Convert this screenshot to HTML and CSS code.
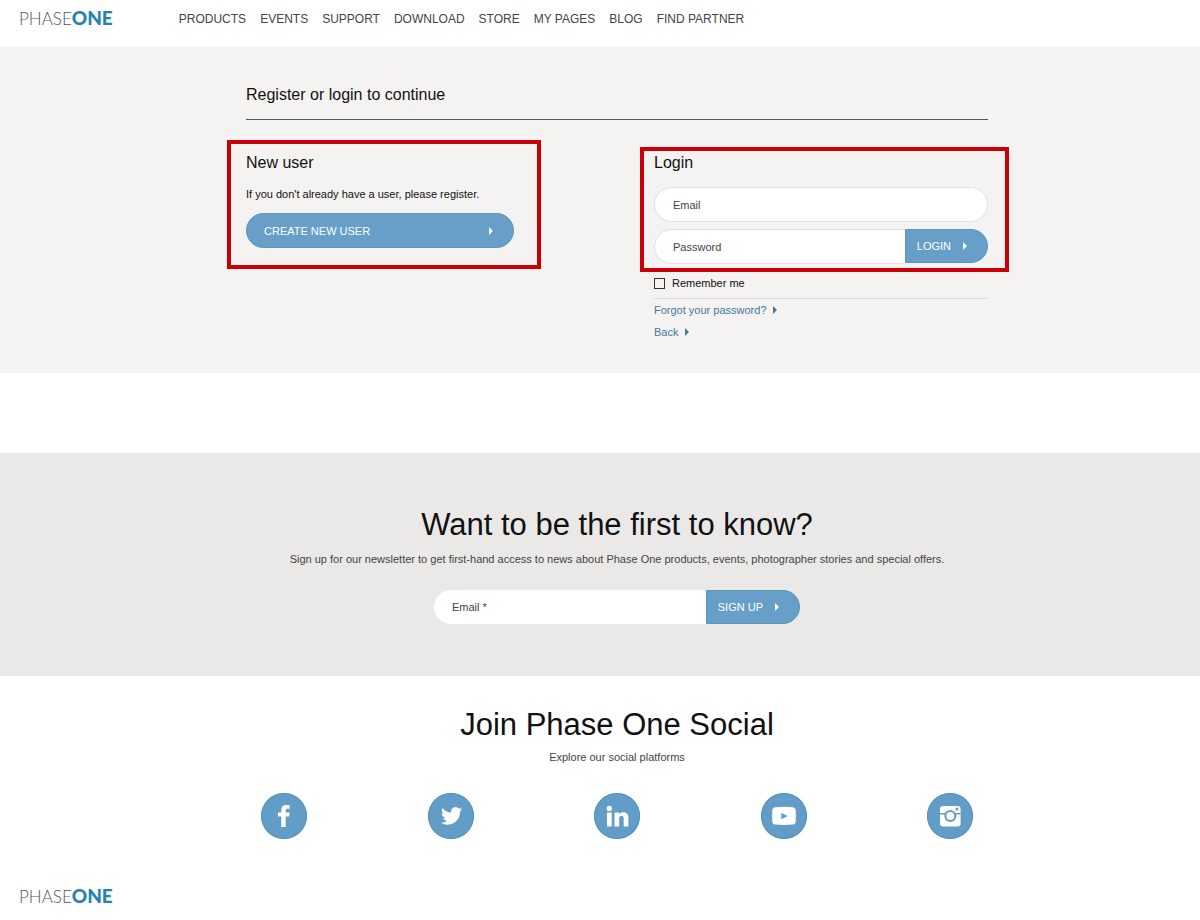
FILE: index.html
```html
<!DOCTYPE html>
<html lang="en">
  <head>
    <meta charset="UTF-8" />
    <meta name="viewport" content="width=device-width, initial-scale=1.0" />
    <title>Phase One - Login</title>
    <link rel="stylesheet" href="styles.css">
  </head>
  <body>
    <header class="header">
      <a class="logo" href="#">PHASE<b>ONE</b></a>
      <nav class="nav">
        <a href="#">PRODUCTS</a>
        <a href="#">EVENTS</a>
        <a href="#">SUPPORT</a>
        <a href="#">DOWNLOAD</a>
        <a href="#">STORE</a>
        <a href="#">MY PAGES</a>
        <a href="#">BLOG</a>
        <a href="#">FIND PARTNER</a>
      </nav>
    </header>

    <main>
      <section class="account">
        <div class="container">
          <h1 class="page-title">Register or login to continue</h1>
          <div class="columns">
            <div class="box new-user">
              <h2>New user</h2>
              <p>If you don't already have a user, please register.</p>
              <button class="btn btn-wide" type="button">CREATE NEW USER <span class="arrow"></span></button>
            </div>
            <form class="login">
              <div class="box login-box">
                <h2>Login</h2>
                <input class="field" type="email" name="email" placeholder="Email" aria-label="Email" />
                <div class="field-row">
                  <input class="field" type="password" name="password" placeholder="Password" aria-label="Password" />
                  <button class="btn" type="submit">LOGIN <span class="arrow"></span></button>
                </div>
              </div>
              <div class="login-extra">
                <div class="remember">
                  <input type="checkbox" id="remember" name="remember" />
                  <label for="remember">Remember me</label>
                </div>
                <a href="#">Forgot your password? <span class="arrow"></span></a>
                <a href="#">Back <span class="arrow"></span></a>
              </div>
            </form>
          </div>
        </div>
      </section>

      <section class="newsletter">
        <h2 class="big-title">Want to be the first to know?</h2>
        <p>Sign up for our newsletter to get first-hand access to news about Phase One products, events, photographer stories and special offers.</p>
        <form class="field-row signup">
          <input class="field" type="email" name="news-email" placeholder="Email *" aria-label="Email" required />
          <button class="btn" type="submit">SIGN UP <span class="arrow"></span></button>
        </form>
      </section>

      <section class="social">
        <h2 class="big-title">Join Phase One Social</h2>
        <p>Explore our social platforms</p>
        <div class="social-links">
          <a href="#" aria-label="Facebook">
            <svg viewBox="0 0 46 46"><path d="M20.3 34V23.6H17v-4h3.3v-2.4c0-3.5 1.8-5.2 5.1-5.2 1.2 0 2.3.1 3.2.3v3.5h-1.8c-1.6 0-2.1.6-2.1 1.9v1.9h3.9l-.5 4h-3.4V34z" /></svg>
          </a>
          <a href="#" aria-label="Twitter">
            <svg viewBox="1 1 43 43"><path d="M33 16.2c-.7.3-1.5.5-2.3.6.8-.5 1.4-1.3 1.7-2.2-.8.5-1.6.8-2.5 1a4.1 4.1 0 0 0-7.1 3.7c-3.4-.2-6.4-1.8-8.4-4.3-1.1 1.9-.5 4.3 1.3 5.5-.7 0-1.3-.2-1.9-.5 0 2 1.4 3.7 3.3 4.1-.6.2-1.2.2-1.9.1.5 1.6 2 2.8 3.8 2.8a8.2 8.2 0 0 1-6 1.7 11.6 11.6 0 0 0 17.9-10.3c.8-.6 1.5-1.3 2.1-2.2z" /></svg>
          </a>
          <a href="#" aria-label="LinkedIn">
            <svg viewBox="0 0 46 46"><circle cx="15.3" cy="15.4" r="2.7" /><path d="M13 19.6h4.7V33.4H13zM20.5 19.6H25v1.9c.8-1.4 2.3-2.3 4.4-2.3 3.8 0 5 2.5 5 6v8.2h-4.7v-7.3c0-1.8-.3-3.3-2.2-3.3s-2.3 1.5-2.3 3.2v7.4h-4.7z" /></svg>
          </a>
          <a href="#" aria-label="YouTube">
            <svg viewBox="0 0 46 46"><path fill-rule="evenodd" d="M14.5 14.2q8.5-.7 17 0 3 .2 3.2 3.2.4 5.5 0 11-.2 3-3.2 3.2-8.5.7-17 0-3-.2-3.2-3.2-.4-5.5 0-11 .2-3 3.2-3.2zM20.3 20v6.2l6.4-3.1z" /></svg>
          </a>
          <a href="#" aria-label="Instagram">
            <svg viewBox="0 0 46 46">
              <rect x="13" y="13" width="20.6" height="20.6" rx="3" />
              <path class="cut" d="M13 20.1h20.6v1.4H13zM28.6 14.8h2.7v2.7h-2.7z" />
              <circle class="cut" cx="23.3" cy="23" r="6" />
              <circle cx="23.3" cy="23" r="3.9" />
            </svg>
          </a>
        </div>
      </section>
    </main>

    <footer class="footer">
      <a class="logo" href="#">PHASE<b>ONE</b></a>
    </footer>
  </body>
</html>
```

FILE: styles.css
```css
* {
  box-sizing: border-box;
}
body {
  margin: 0;
  background-color: #fff;
  color: #111;
  font-family: "Liberation Sans", Arial, sans-serif;
  font-size: 11px;
  line-height: 16px;
}
h1,
h2,
p {
  margin: 0;
  font-weight: normal;
}
a {
  text-decoration: none;
}

/* header */
.header {
  display: flex;
  align-items: center;
  gap: 66px;
  padding: 9px 19px 18px;
}
.logo {
  color: #555;
  font-family: Lato, sans-serif;
  font-size: 17px;
  font-weight: 300;
  line-height: 20px;
}
.logo b {
  color: #2484ae;
  font-size: 19px;
  font-weight: 900;
  line-height: 16px;
}
.nav {
  display: flex;
  gap: 14px;
}
.nav a {
  color: #444;
  font-size: 12px;
}

/* register / login */
.account {
  padding: 38px 0 30px 34px;
  background-color: #f4f3f2;
}
.container {
  max-width: 742px;
  margin: 0 auto;
}
.page-title {
  padding-bottom: 14px;
  border-bottom: 1px solid #555;
  font-size: 16px;
  line-height: 20px;
}
.columns {
  display: flex;
  justify-content: space-between;
  align-items: flex-start;
  margin: 20px -21px 0 -19px;
}
.box {
  border: 4px solid #c90007;
}
.box h2 {
  font-size: 16px;
  line-height: 20px;
}
.new-user {
  width: 314px;
  padding: 9px 23px 17px 15px;
}
.new-user p {
  margin: 13px 0 11px;
}
.login {
  width: 369px;
  margin-top: 7px;
}
.login-box {
  padding: 2px 17px 4px 10px;
}
.login-box h2 {
  margin-bottom: 14px;
}
.login-box .field-row {
  margin-top: 7px;
}
.login-extra {
  display: flex;
  flex-direction: column;
  padding: 3px 21px 0 14px;
}
.login-extra a {
  color: #42799c;
  line-height: 22px;
}
.login-extra .arrow {
  margin-left: 3px;
}
.remember {
  display: flex;
  align-items: center;
  gap: 7px;
  padding-bottom: 7px;
  border-bottom: 1px solid #dcdcdb;
}
.remember input {
  appearance: none;
  width: 11px;
  height: 11px;
  margin: 0;
  border: 1px solid #333;
}
.remember input:checked {
  background-color: #333;
}

/* fields and buttons */
.field {
  display: block;
  width: 100%;
  height: 35px;
  padding: 0 18px;
  border: 1px solid #e2e2e1;
  border-radius: 18px;
  background-color: #fff;
  color: #444;
  font: inherit;
}
.field::placeholder {
  color: #444;
  opacity: 1;
}
.field-row {
  display: flex;
}
.field-row .field {
  flex: 1;
  min-width: 0;
  border-right: 0;
  border-radius: 18px 0 0 18px;
}
.btn {
  display: flex;
  align-items: center;
  gap: 12px;
  height: 34px;
  padding: 0 20px 0 11px;
  border: 1px solid #5b96bb;
  border-radius: 0 18px 18px 0;
  background-color: #689fc8;
  color: #fff;
  font: inherit;
}
.btn-wide {
  justify-content: space-between;
  width: 100%;
  height: 35px;
  padding: 0 20px 0 17px;
  border-radius: 18px;
}
.arrow {
  display: inline-block;
  border: 4px solid transparent;
  border-left-color: currentColor;
  border-right: 0;
}

/* newsletter */
.newsletter,
.social {
  padding-left: 34px;
  color: #444;
  text-align: center;
}
.newsletter {
  margin-top: 80px;
  padding-top: 54px;
  padding-bottom: 52px;
  background-color: #eae9e8;
}
.big-title {
  color: #111;
  font-size: 31px;
  line-height: 36px;
}
.newsletter p {
  margin: 8px 0 23px;
}
.signup {
  max-width: 366px;
  margin: 0 auto;
}
.signup .field {
  height: 34px;
  border: 0;
}

/* social */
.social {
  padding-top: 31px;
}
.social p {
  margin: 6px 0 28px;
}
.social-links {
  display: flex;
  justify-content: space-between;
  max-width: 712px;
  margin: 0 auto;
}
.social-links a {
  width: 46px;
  height: 46px;
  border-radius: 50%;
  background-color: #619dc6;
  box-shadow: inset 0 0 0 1px #5993b8;
}
.social-links svg {
  display: block;
  fill: #fff;
}
.social-links .cut {
  fill: #619dc6;
}

.footer {
  display: flex;
  padding: 48px 19px 12px;
}
```
